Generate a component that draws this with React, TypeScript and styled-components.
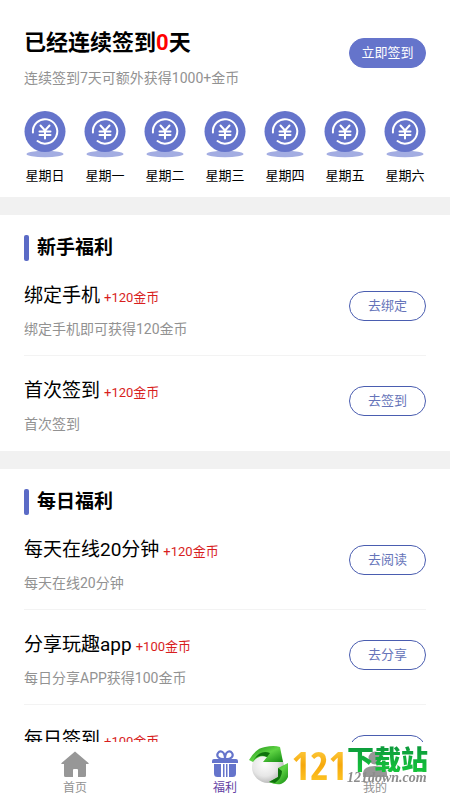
import React from "react";
import styled, { createGlobalStyle, css } from "styled-components";

const GlobalStyle = createGlobalStyle`
  * { box-sizing: border-box; }
  body {
    margin: 0;
    background: #fff;
    color: #000;
    font-family: Roboto, "Noto Sans CJK SC", sans-serif;
  }
  button, a { font: inherit; }
  h1, h2, h3, p, ul { margin: 0; padding: 0; }
  ul { list-style: none; }
`;

const Page = styled.div`
  display: flex;
  flex-direction: column;
  height: 100vh;
`;

const Content = styled.main`
  flex: 1;
  min-height: 0;
  overflow-y: auto;
  scrollbar-width: none;
  display: flex;
  flex-direction: column;
  gap: 18px;
  background: #f1f1f1;
`;

const CheckIn = styled.section`
  flex: none;
  padding: 28px 24px 10px;
  background: #fff;
`;

const SplitRow = styled.div`
  display: flex;
  align-items: flex-start;
  justify-content: space-between;
`;

const Title = styled.h1`
  font-size: 22px;
  line-height: 30px;
  font-weight: 700;
`;

const Count = styled.span`
  color: #f00;
`;

const Note = styled.p`
  margin-top: 9px;
  color: #929292;
  font-size: 14px;
  line-height: 22px;
`;

const PillButton = styled.button<{ $filled?: boolean }>`
  flex: none;
  width: 77px;
  height: 30px;
  margin-top: 10px;
  padding: 0;
  border: 1px solid #4a5db0;
  border-radius: 15px;
  background: #fff;
  color: #6674b9;
  font-size: 13px;
  line-height: 20px;
  cursor: pointer;
  ${(p) =>
    p.$filled &&
    css`
      border-color: #6574cb;
      background: #6574cb;
      color: #fff;
    `}
`;

const Week = styled.ul`
  display: flex;
  justify-content: space-between;
  margin-top: 22px;
`;

const Day = styled.li`
  display: flex;
  flex-direction: column;
  align-items: center;
  gap: 7px;
  font-size: 13px;
  line-height: 22px;
  svg { display: block; }
`;

const Section = styled.section`
  flex: none;
  padding: 19px 24px 0;
  background: #fff;
`;

const SectionTitle = styled.h2`
  display: flex;
  align-items: center;
  gap: 8px;
  font-size: 19px;
  line-height: 27px;
  font-weight: 700;
  &::before {
    content: "";
    width: 5px;
    height: 26px;
    border-radius: 2px;
    background: #5b6bc6;
  }
`;

const Task = styled(SplitRow).attrs({ as: "li" })`
  height: 95px;
  padding-top: 20px;
  border-bottom: 1px solid #f3f3f3;
  &:last-child { border-bottom: 0; }
`;

const TaskTitle = styled.h3`
  font-size: 19px;
  line-height: 30px;
  font-weight: 400;
`;

const Reward = styled.span`
  margin-left: 4px;
  color: #d81e1e;
  font-size: 13px;
`;

const TaskNote = styled(Note)`
  margin-top: 5px;
`;

const TabBar = styled.nav`
  position: relative;
  flex: none;
  display: grid;
  grid-template-columns: repeat(3, 1fr);
  height: 58px;
  background: #fff;
`;

const Tab = styled.a<{ $active?: boolean }>`
  display: flex;
  flex-direction: column;
  align-items: center;
  padding-top: 8px;
  color: ${(p) => (p.$active ? "#6442a4" : "#929292")};
  font-size: 12px;
  line-height: 18px;
  text-decoration: none;
  svg { display: block; margin-bottom: 1px; }
`;

const Watermark = styled.div`
  position: absolute;
  right: 22px;
  bottom: 15px;
  display: flex;
  align-items: center;
  height: 40px;
  pointer-events: none;
  svg { display: block; }
`;

const MarkNumber = styled.span`
  font: 700 40px/40px "Liberation Sans Narrow", "Open Sans Condensed", Roboto, sans-serif;
  background: linear-gradient(#ffd34a, #f6a90c 50%, #ffc928);
  background-clip: text;
  color: transparent;
`;

const MarkWords = styled.div`
  display: flex;
  flex-direction: column;
`;

const MarkName = styled.span`
  font: 900 27px/26px "Noto Sans CJK SC", sans-serif;
  background: linear-gradient(#0c9a3c, #16c43a);
  background-clip: text;
  color: transparent;
`;

const MarkSite = styled.span`
  font: italic 700 14px/12px "Liberation Serif", serif;
  color: #8c8c8c;
`;

const Coin = () => (
  <svg width="42" height="47" viewBox="0 0 42 47" aria-hidden="true">
    <ellipse cx="21" cy="43" rx="18.5" ry="3.3" fill="#a3ade2" />
    <circle cx="21" cy="20.5" r="20.5" fill="#6574cb" />
    <g fill="none" stroke="#fff" strokeWidth="2" strokeLinecap="round" strokeLinejoin="round">
      <path d="M8.900 21.500A12.200 12.200 0 1 1 13.500 30" />
      <path d="M16.500 14.500l4.500 5 4.500-5M15.500 20.500h11M15.500 24h11M21 20v7.500" />
    </g>
  </svg>
);

const HomeIcon = () => (
  <svg width="28" height="28" viewBox="0 0 28 28" aria-hidden="true">
    <path fill="#979797" d="M14 1.5 27.5 13c.5.5.3 1-.4 1H25v11.5q0 1.500-1.500 1.500H17v-7q0-1-1-1h-3q-1 0-1 1v7H4.500Q3 27 3 25.500V14H.9c-.7 0-.9-.5-.4-1Z" />
  </svg>
);

const GiftIcon = () => (
  <svg width="28" height="28" viewBox="0 0 28 28" aria-hidden="true">
    <path
      fill="#6574cb"
      d="M3 9h22q2 0 2 2v2H1v-2q0-2 2-2ZM3 14h7v13H6.500Q3 27 3 23.500ZM12 14h1.500v13H12ZM15 14h1.500v13H15ZM18 14h7v9.500q0 3.500-3.500 3.500H18Z"
    />
    <path d="M14 9C8 10 5 6 7 3s7-2 7 6c0-8 5-9 7-6s-1 7-7 6" fill="none" stroke="#6574cb" strokeWidth="2.200" />
  </svg>
);

const UserIcon = () => (
  <svg width="28" height="28" viewBox="0 0 28 28" aria-hidden="true">
    <circle cx="14" cy="8" r="6.500" fill="#979797" />
    <path d="M2 27v-3q0-8 12-8t12 8v3Z" fill="#979797" />
  </svg>
);

const Ball = () => (
  <svg width="42" height="40" viewBox="0 0 42 40" aria-hidden="true">
    <defs>
      <radialGradient id="ball" cx="0.4" cy="0.4" r="0.65">
        <stop offset="0" stopColor="#fdfdfd" />
        <stop offset="0.6" stopColor="#e6e6e6" />
        <stop offset="1" stopColor="#b4b4b4" />
      </radialGradient>
      <linearGradient id="leaf" x1="0" y1="0" x2="1" y2="1">
        <stop offset="0" stopColor="#188a12" />
        <stop offset="0.5" stopColor="#5fd444" />
        <stop offset="1" stopColor="#128a10" />
      </linearGradient>
    </defs>
    <circle cx="19" cy="22" r="16" fill="url(#ball)" />
    <path d="M0 15Q7 3 16 2 25 0 31 2L34 17 14 17 18 12Q10 9 4 17Z" fill="url(#leaf)" />
    <path d="M4 16Q10 8 18 12l3-4Q11 4 4 16Z" fill="#0f720d" />
    <path d="M29 23 39 18V32Q37 37 32 39 26 40 20 37L29 32Z" fill="url(#leaf)" />
    <path d="M29 23 33 26Q33 33 26 38L20 37 29 32Z" fill="#0f720d" />
  </svg>
);

type TaskItem = { title: string; reward: number; note: string; action: string };

const days = ["日", "一", "二", "三", "四", "五", "六"];

const starterTasks: TaskItem[] = [
  { title: "绑定手机", reward: 120, note: "绑定手机即可获得120金币", action: "去绑定" },
  { title: "首次签到", reward: 120, note: "首次签到", action: "去签到" },
];

const dailyTasks: TaskItem[] = [
  { title: "每天在线20分钟", reward: 120, note: "每天在线20分钟", action: "去阅读" },
  { title: "分享玩趣app", reward: 100, note: "每日分享APP获得100金币", action: "去分享" },
  { title: "每日签到", reward: 100, note: "每日签到", action: "去签到" },
];

const TaskSection = ({ title, tasks }: { title: string; tasks: TaskItem[] }) => (
  <Section>
    <SectionTitle>{title}</SectionTitle>
    <ul>
      {tasks.map((t) => (
        <Task key={t.title}>
          <div>
            <TaskTitle>
              {t.title}
              <Reward>+{t.reward}金币</Reward>
            </TaskTitle>
            <TaskNote>{t.note}</TaskNote>
          </div>
          <PillButton type="button">{t.action}</PillButton>
        </Task>
      ))}
    </ul>
  </Section>
);

export default function App() {
  return (
    <Page>
      <GlobalStyle />
      <Content>
        <CheckIn>
          <SplitRow>
            <div>
              <Title>
                已经连续签到<Count>0</Count>天
              </Title>
              <Note>连续签到7天可额外获得1000+金币</Note>
            </div>
            <PillButton type="button" $filled>立即签到</PillButton>
          </SplitRow>
          <Week>
            {days.map((d) => (
              <Day key={d}>
                <Coin />
                星期{d}
              </Day>
            ))}
          </Week>
        </CheckIn>
        <TaskSection title="新手福利" tasks={starterTasks} />
        <TaskSection title="每日福利" tasks={dailyTasks} />
      </Content>
      <TabBar>
        <Tab href="#home"><HomeIcon />首页</Tab>
        <Tab href="#welfare" $active aria-current="page"><GiftIcon />福利</Tab>
        <Tab href="#me"><UserIcon />我的</Tab>
        <Watermark>
          <Ball />
          <MarkNumber>121</MarkNumber>
          <MarkWords>
            <MarkName>下载站</MarkName>
            <MarkSite>121down.com</MarkSite>
          </MarkWords>
        </Watermark>
      </TabBar>
    </Page>
  );
}
